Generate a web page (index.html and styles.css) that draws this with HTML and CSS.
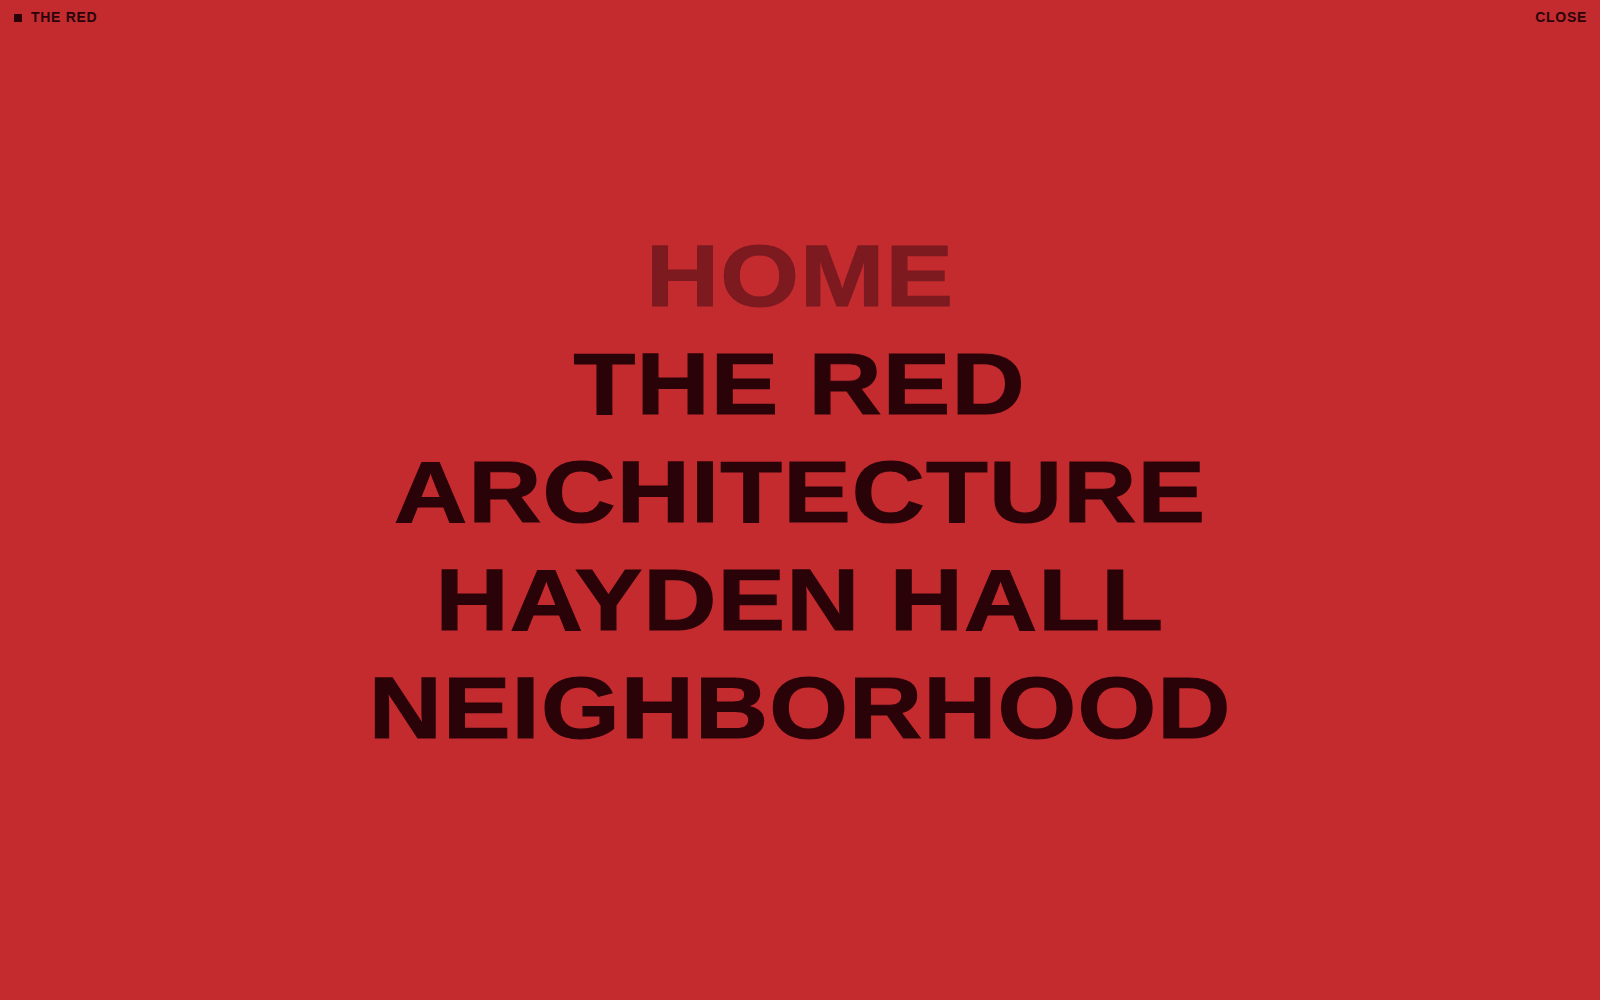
FILE: index.html
```html
<!DOCTYPE html>
<html lang="en">
<head>
<meta charset="utf-8">
<title>The Red</title>
<link rel="stylesheet" href="styles.css">
</head>
<body>
<div class="page">
  <header class="topbar">
    <div class="brand"><span class="square"></span><span>THE RED</span></div>
    <div class="close">CLOSE</div>
  </header>
  <nav class="menu">
    <a class="item current" href="#">HOME</a>
    <a class="item" href="#">THE RED</a>
    <a class="item" href="#">ARCHITECTURE</a>
    <a class="item" href="#">HAYDEN HALL</a>
    <a class="item" href="#">NEIGHBORHOOD</a>
  </nav>
</div>
</body>
</html>
```
FILE: styles.css
```css
html, body {
  margin: 0;
  padding: 0;
  height: 100%;
}
body {
  background: #c32b2f;
  color: #2a0309;
  font-family: "Liberation Sans", Arial, sans-serif;
}
.page {
  height: 1000px;
  display: flex;
  flex-direction: column;
}
.topbar {
  display: flex;
  justify-content: space-between;
  align-items: center;
  padding: 9px 13px 0 14px;
  font-size: 14px;
  font-weight: 700;
  line-height: 17px;
  letter-spacing: 0.7px;
}
.brand {
  display: flex;
  align-items: center;
  gap: 9px;
}
.square {
  width: 8px;
  height: 8px;
  background: #2a0309;
}
.menu {
  flex: 1;
  display: flex;
  flex-direction: column;
  align-items: center;
  justify-content: center;
  padding-bottom: 42px;
}
.item {
  color: #2a0309;
  text-decoration: none;
  font-size: 88px;
  font-weight: 700;
  line-height: 108px;
  letter-spacing: 1px;
  -webkit-text-stroke: 1.2px currentColor;
  transform: scaleX(1.15);
  transform-origin: center;
}
.item.current {
  color: #7c1a20;
}
```
